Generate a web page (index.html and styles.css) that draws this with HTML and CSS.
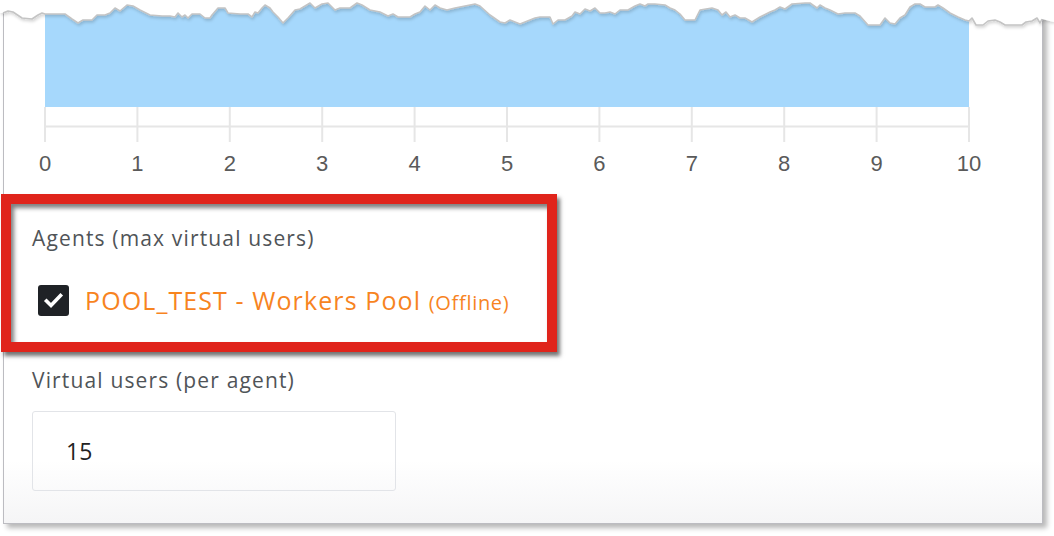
FILE: index.html
```html
<!DOCTYPE html>
<html>
<head>
<meta charset="utf-8">
<link rel="stylesheet" href="styles.css">
</head>
<body>
<div class="card">
  <svg class="chart" width="1054" height="180" viewBox="0 0 1054 180">
    <defs>
      <filter id="tear" x="-5%" y="-50%" width="110%" height="300%">
        <feDropShadow dx="1" dy="2" stdDeviation="1.4" flood-color="#000" flood-opacity="0.16"/>
      </filter>
    </defs>
    <rect x="45" y="0" width="924" height="107" fill="#a6d8fc"/>
    <g class="grid">
      <line x1="45" y1="126.5" x2="969" y2="126.5"/>
      <line x1="45" y1="107" x2="45" y2="142"/>
      <line x1="137.4" y1="107" x2="137.4" y2="142"/>
      <line x1="229.8" y1="107" x2="229.8" y2="142"/>
      <line x1="322.2" y1="107" x2="322.2" y2="142"/>
      <line x1="414.6" y1="107" x2="414.6" y2="142"/>
      <line x1="507" y1="107" x2="507" y2="142"/>
      <line x1="599.4" y1="107" x2="599.4" y2="142"/>
      <line x1="691.8" y1="107" x2="691.8" y2="142"/>
      <line x1="784.2" y1="107" x2="784.2" y2="142"/>
      <line x1="876.6" y1="107" x2="876.6" y2="142"/>
      <line x1="969" y1="107" x2="969" y2="142"/>
    </g>
    <g class="ticks">
      <text x="45" y="170.5">0</text>
      <text x="137.4" y="170.5">1</text>
      <text x="229.8" y="170.5">2</text>
      <text x="322.2" y="170.5">3</text>
      <text x="414.6" y="170.5">4</text>
      <text x="507" y="170.5">5</text>
      <text x="599.4" y="170.5">6</text>
      <text x="691.8" y="170.5">7</text>
      <text x="784.2" y="170.5">8</text>
      <text x="876.6" y="170.5">9</text>
      <text x="969" y="170.5">10</text>
    </g>
    <g filter="url(#tear)">
      <polygon class="paper" points="0,0 1054,0 1054,22 1042,19 1040,23 1037,18 1032,21 1026,22 1022,25 1005,25 1000,22 995,20 988,21 983,25 976,25 972,18 969,21 965,20 958,17 950,13 943,8 938,5 935,7 925,7 920,4 915,4 910,7 905,15 900,18 895,24 890,23 885,18 880,25 868,25 860,16 855,13 845,13 838,14 830,10 825,8 820,5 817,8 810,3 805,3 792,4 785,9 780,7 775,10 770,12 760,17 752,22 745,18 740,18 735,15 730,17 726,12 722,15 718,10 712,8 700,10 695,20 685,20 680,14 675,10 670,8 665,5 655,4 648,4 645,6 640,4 635,6 628,10 620,10 615,14 610,12 605,13 600,13 595,8 590,11 585,9 580,14 575,12 572,16 565,20 558,20 553,24 550,17 540,17 535,18 530,20 520,24 515,22 510,20 505,23 500,22 490,15 480,6 475,4 455,8 447,10 440,8 435,5 430,10 425,6 420,12 415,14 410,17 398,17 393,14 388,16 380,12 370,10 362,5 357,3 350,8 340,8 335,10 328,3 322,4 315,8 310,3 305,6 300,9 295,10 288,18 283,23 278,17 273,12 270,8 265,5 262,8 258,13 255,12 252,17 248,14 240,14 228,13 225,8 218,8 212,15 210,18 205,18 200,14 192,14 188,18 185,15 182,17 178,13 175,17 170,16 162,16 150,15 140,10 133,6 127,5 120,11 115,8 110,13 105,15 97,15 92,20 83,20 78,23 72,19 65,14 45,14 42,13 38,15 32,19 22,18 13,12 8,11 3,13 0,13"/>
      <polyline class="edge" points="3,13 8,11 13,12 22,18 32,19 38,15 42,13 45,14 65,14 72,19 78,23 83,20 92,20 97,15 105,15 110,13 115,8 120,11 127,5 133,6 140,10 150,15 162,16 170,16 175,17 178,13 182,17 185,15 188,18 192,14 200,14 205,18 210,18 212,15 218,8 225,8 228,13 240,14 248,14 252,17 255,12 258,13 262,8 265,5 270,8 273,12 278,17 283,23 288,18 295,10 300,9 305,6 310,3 315,8 322,4 328,3 335,10 340,8 350,8 357,3 362,5 370,10 380,12 388,16 393,14 398,17 410,17 415,14 420,12 425,6 430,10 435,5 440,8 447,10 455,8 475,4 480,6 490,15 500,22 505,23 510,20 515,22 520,24 530,20 535,18 540,17 550,17 553,24 558,20 565,20 572,16 575,12 580,14 585,9 590,11 595,8 600,13 605,13 610,12 615,14 620,10 628,10 635,6 640,4 645,6 648,4 655,4 665,5 670,8 675,10 680,14 685,20 695,20 700,10 712,8 718,10 722,15 726,12 730,17 735,15 740,18 745,18 752,22 760,17 770,12 775,10 780,7 785,9 792,4 805,3 810,3 817,8 820,5 825,8 830,10 838,14 845,13 855,13 860,16 868,25 880,25 885,18 890,23 895,24 900,18 905,15 910,7 915,4 920,4 925,7 935,7 938,5 943,8 950,13 958,17 965,20 969,21 972,18 976,25 983,25 988,21 995,20 1000,22 1005,25 1022,25 1026,22 1032,21 1037,18 1040,23 1042,19"/>
    </g>
  </svg>

  <section class="agents">
    <div class="field-label">Agents (max virtual users)</div>
    <label class="agent-row">
      <span class="checkbox">
        <svg width="31" height="31" viewBox="0 0 31 31"><polyline points="8.5,16 13,20.5 22.5,10.5" fill="none" stroke="#fff" stroke-width="3.6" stroke-linecap="square" stroke-linejoin="miter"/></svg>
      </span>
      <span class="agent-name">POOL_TEST - Workers Pool <small class="status">(Offline)</small></span>
    </label>
  </section>

  <section class="vu">
    <div class="field-label">Virtual users (per agent)</div>
    <div class="input">15</div>
  </section>
</div>
</body>
</html>
```

FILE: styles.css
```css
html, body {
  margin: 0;
  padding: 0;
  background: #ffffff;
}

body {
  width: 1054px;
  height: 536px;
  overflow: hidden;
  font-family: "Open Sans", Lato, sans-serif;
}

.card {
  box-sizing: border-box;
  margin-left: 3px;
  width: 1040px;
  height: 524px;
  border-left: 1px solid #bcbcc1;
  border-right: 1px solid #bcbcc1;
  border-bottom: 1px solid #bcbcc1;
  background: linear-gradient(to bottom, #ffffff 0%, #ffffff 88%, #f5f5f6 100%);
  box-shadow: 4px 4px 5px rgba(0, 0, 0, 0.28);
}

.chart {
  display: block;
  margin-left: -4px;
  overflow: visible;
}

.grid line {
  stroke: #e6e6e6;
  stroke-width: 2;
}

.ticks text {
  font-family: "Liberation Sans", Arial, sans-serif;
  font-size: 22px;
  fill: #5a5a5a;
  text-anchor: middle;
}

.paper {
  fill: #ffffff;
}

.edge {
  fill: none;
  stroke: #c4c4c4;
  stroke-width: 1.6;
  stroke-linejoin: round;
}

.agents {
  box-sizing: border-box;
  margin-top: 14px;
  margin-left: -3px;
  width: 556px;
  height: 158px;
  border: 10px solid #e0241b;
  padding: 21px 0 0 21px;
  box-shadow: 3px 4px 4px rgba(0, 0, 0, 0.55), inset 3px 4px 4px rgba(0, 0, 0, 0.5);
}

.field-label {
  font-size: 21px;
  letter-spacing: 1.15px;
  line-height: 26px;
  color: #505458;
}

.agent-row {
  display: flex;
  align-items: center;
  margin-top: 33px;
  margin-left: 6px;
  gap: 16px;
}

.checkbox {
  width: 31px;
  height: 31px;
  border-radius: 3px;
  background: #1f2226;
  flex: none;
}

.checkbox svg {
  display: block;
}

.agent-name {
  font-size: 25px;
  letter-spacing: 1.1px;
  line-height: 31px;
  color: #f7841f;
  position: relative;
  top: 1px;
}

.status {
  font-size: 20px;
  letter-spacing: 0.7px;
}

.vu {
  padding: 15px 0 0 28px;
}

.input {
  box-sizing: border-box;
  margin-top: 18px;
  width: 364px;
  height: 80px;
  border: 1px solid #e2e4e8;
  border-radius: 3px;
  padding-left: 33px;
  font-size: 23px;
  line-height: 78px;
  color: #222222;
}
```
